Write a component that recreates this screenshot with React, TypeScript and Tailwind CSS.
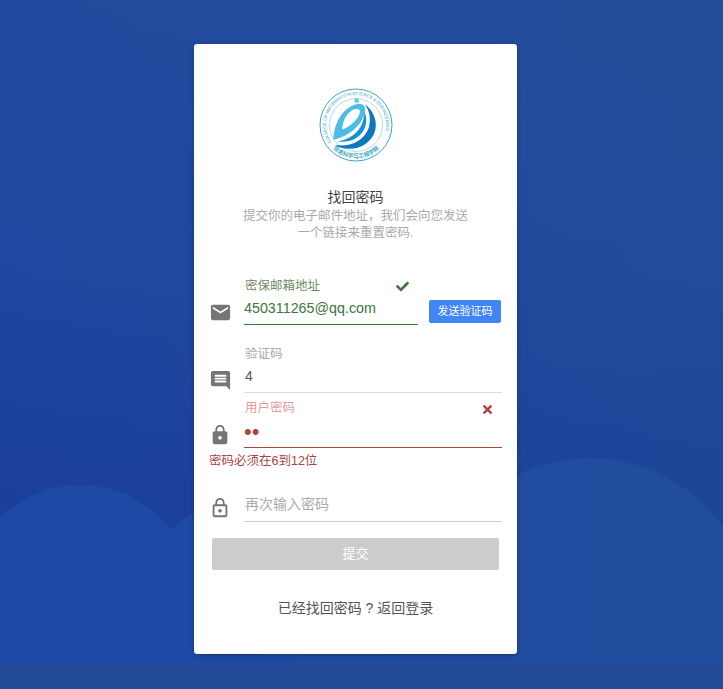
import type { ReactNode } from "react";
import { FaCheck, FaTimes } from "react-icons/fa";

const Field = ({
  icon,
  label,
  value,
  labelClass,
  valueClass,
  lineClass,
  iconClass = "pb-[1px]",
  className = "",
}: {
  icon: ReactNode;
  label: string;
  value: string;
  labelClass: string;
  valueClass: string;
  lineClass: string;
  iconClass?: string;
  className?: string;
}) => (
  <div className={`flex items-end ${className}`}>
    <div className={`w-[50px] pl-[15px] shrink-0 ${iconClass}`}>{icon}</div>
    <div className={`flex-1 border-b ${lineClass}`}>
      <div className={`text-[12.5px] leading-[16px] pl-px ${labelClass}`}>{label}</div>
      <div className={`mt-[4px] leading-[20px] ${valueClass}`}>{value}</div>
    </div>
  </div>
);

const Logo = () => (
  <svg viewBox="0 0 74 74" className="w-[74px] h-[74px]">
    <defs>
      <path id="ringTop" d="M12.4 54.2 A30 30 0 1 1 61.6 54.2" />
      <path id="ringBottom" d="M9 54.5 A33 33 0 0 0 65 54.5" />
    </defs>
    <circle cx="37" cy="37" r="36" fill="none" stroke="#3aa6c9" strokeWidth="1" />
    <circle cx="37" cy="37" r="26.5" fill="none" stroke="#7cc5dc" strokeWidth="0.6" />
    <text fontSize="4.4" fill="#3aa6c9" fontFamily="Liberation Sans, sans-serif">
      <textPath href="#ringTop" textLength="118">COLLEGE OF INFORMATION SCIENCE &amp; ENGINEERING</textPath>
    </text>
    <text fontSize="5.6" fontWeight="700" fill="#3aa6c9" textAnchor="middle" fontFamily="Noto Sans CJK SC, sans-serif">
      <textPath href="#ringBottom" startOffset="50%">信息科学与工程学院</textPath>
    </text>
    <circle cx="37.7" cy="12.7" r="2.4" fill="#6cc6ea" />
    <g transform="translate(37 37) scale(0.35) translate(-170 -165)">
      <path d="M105 207 C108 160 130 118 170 106 C190 100 200 112 195 130 C187 165 150 198 105 207 Z M130 178 C150 172 178 150 181 128 C182 118 172 116 160 122 C142 132 132 155 130 178 Z" fill="#4fbbe8" fillRule="evenodd" />
      <path d="M195 106 C232 132 242 190 196 220 C170 238 130 236 110 222 C150 228 190 214 206 174 C214 150 209 124 195 106 Z" fill="#0b78bf" />
      <path d="M194 128 C206 152 198 186 170 203 C152 213 132 214 118 212 C150 206 176 190 188 160 C192 149 194 138 194 128 Z" fill="#1690d4" />
    </g>
  </svg>
);

const MailIcon = () => (
  <svg viewBox="0 0 24 24" className="w-[23px] h-[23px]" fill="#757575">
    <path d="M20 4H4c-1.1 0-2 .9-2 2v12c0 1.1.9 2 2 2h16c1.1 0 2-.9 2-2V6c0-1.1-.9-2-2-2zm0 4l-8 5-8-5V6l8 5 8-5v2z" />
  </svg>
);

const CommentIcon = () => (
  <svg viewBox="0 0 24 24" className="w-[23px] h-[23px]" fill="#757575">
    <path d="M20 2H4c-1.1 0-2 .9-2 2v12c0 1.1.9 2 2 2h14l4 4V4c0-1.1-.9-2-2-2zm-2 12H6v-2h12v2zm0-3H6V9h12v2zm0-3H6V6h12v2z" />
  </svg>
);

const LockIcon = () => (
  <svg viewBox="0 0 24 24" className="w-[22px] h-[22px]" fill="#757575">
    <path d="M18 8h-1V6c0-2.76-2.24-5-5-5S7 3.24 7 6v2H6c-1.1 0-2 .9-2 2v10c0 1.1.9 2 2 2h12c1.1 0 2-.9 2-2V10c0-1.1-.9-2-2-2zm-6 9c-1.1 0-2-.9-2-2s.9-2 2-2 2 .9 2 2-.9 2-2 2zm3.1-9H8.9V6c0-1.71 1.39-3.1 3.1-3.1 1.71 0 3.1 1.39 3.1 3.1v2z" />
  </svg>
);

const LockOutlineIcon = () => (
  <svg viewBox="0 0 24 24" className="w-[22px] h-[22px]" fill="#757575">
    <path d="M12 17c1.1 0 2-.9 2-2s-.9-2-2-2-2 .9-2 2 .9 2 2 2zm6-9h-1V6c0-2.76-2.24-5-5-5S7 3.24 7 6v2H6c-1.1 0-2 .9-2 2v10c0 1.1.9 2 2 2h12c1.1 0 2-.9 2-2V10c0-1.1-.9-2-2-2zM8.9 6c0-1.71 1.39-3.1 3.1-3.1s3.1 1.39 3.1 3.1v2H8.9V6zM18 20H6V10h12v10z" />
  </svg>
);

export default function App() {
  return (
    <div
      className="relative h-[689px] overflow-hidden bg-[#1d429f] pt-[44px]"
      style={{ fontFamily: '"Liberation Sans", "Noto Sans CJK SC", sans-serif' }}
    >
      {/* background hills */}
      <svg viewBox="0 0 723 689" className="absolute inset-0 w-full h-full">
        <defs>
          <linearGradient id="sky" x1="0" y1="0" x2="0" y2="1">
            <stop offset="0" stopColor="#214a9e" />
            <stop offset="0.4" stopColor="#1f479f" />
            <stop offset="0.72" stopColor="#1b3f9b" />
            <stop offset="1" stopColor="#1b3f9b" />
          </linearGradient>
          <linearGradient id="tint" x1="0" y1="0" x2="1" y2="0">
            <stop offset="0" stopColor="#2a5a8c" stopOpacity="0" />
            <stop offset="1" stopColor="#2a5a8c" stopOpacity="0.2" />
          </linearGradient>
        </defs>
        <rect width="723" height="689" fill="url(#sky)" />
        <circle cx="80" cy="601" r="116" fill="#1d49a6" />
        <rect x="0" y="600" width="300" height="89" fill="#1d49a6" />
        <circle cx="265" cy="620" r="130" fill="#1d49a6" />
        <circle cx="590" cy="621" r="163" fill="#1f4aa3" />
        <rect x="395" y="620" width="328" height="69" fill="#1f4aa3" />
        <rect x="300" y="620" width="100" height="69" fill="#1e4aa4" />
        <rect width="723" height="689" fill="url(#tint)" />
        <rect y="664" width="723" height="25" fill="#234a96" />
      </svg>

      <div className="relative ml-[194px] h-[610px] w-[323px] rounded-[3px] bg-white pt-[44px] shadow-[0_1px_4px_rgba(0,0,0,0.3)]">
        <div className="flex justify-center">
          <Logo />
        </div>
        <h1 className="mt-[26px] text-center text-[14px] font-normal leading-[18px] text-[#444]">找回密码</h1>
        <p className="mt-[2px] text-center text-[12.5px] leading-[17px] text-[#aaa]">
          提交你的电子邮件地址，我们会向您发送
          <br />
          一个链接来重置密码.
        </p>

        <div className="relative mt-[36px]">
          <div className="flex items-end pr-[16px]">
            <div className="flex-1">
              <Field
                icon={<MailIcon />}
                label="密保邮箱地址"
                value="450311265@qq.com"
                labelClass="text-[#6f8a63]"
                valueClass="pb-[6px] text-[14.3px] text-[#3c763d]"
                lineClass="border-[#3c763d]"
              />
            </div>
            <button className="mb-[2px] ml-[11px] h-[23px] w-[72px] rounded-[2px] bg-[#4285f4] text-[11px] text-white">发送验证码</button>
          </div>
          <FaCheck className="absolute left-[202px] top-[2px] h-[13px] w-[13px] text-[#3c763d]" />
        </div>

        <Field
          icon={<CommentIcon />}
          label="验证码"
          value="4"
          labelClass="text-[#aaa]"
          valueClass="pb-[6px] pl-px text-[14px] text-[#555]"
          lineClass="border-[#ddd]"
          className="mt-[21px] pr-[15px]"
        />

        <div className="relative">
          <Field
            icon={<LockIcon />}
            label="用户密码"
            value="••"
            labelClass="text-[#e59a9a]"
            valueClass="pt-[2px] pb-[5px] text-[22px] text-[#a94442]"
            lineClass="border-[#a94442]"
            iconClass="pb-[2px]"
            className="mt-[7px] pr-[15px]"
          />
          <FaTimes className="absolute left-[287px] top-[3px] h-[13px] w-[13px] text-[#a94442]" />
        </div>
        <div className="mt-[5px] pl-[15px] text-[12.5px] leading-[16px] text-[#a94442]">密码必须在6到12位</div>

        <div className="mt-[25px] flex items-end pr-[15px]">
          <div className="w-[50px] shrink-0 pb-[3px] pl-[15px]">
            <LockOutlineIcon />
          </div>
          <div className="flex-1 border-b border-[#ccc] pb-[7px] pl-px text-[14px] leading-[20px] text-[#aaa]">再次输入密码</div>
        </div>

        <button className="mx-[18px] mt-[16px] block h-[32px] w-[287px] rounded-[2px] bg-[#ccc] text-[13px] text-white">提交</button>

        <p className="mt-[28px] text-center text-[14px] leading-[20px] text-[#555]">已经找回密码 ? 返回登录</p>
      </div>
    </div>
  );
}
